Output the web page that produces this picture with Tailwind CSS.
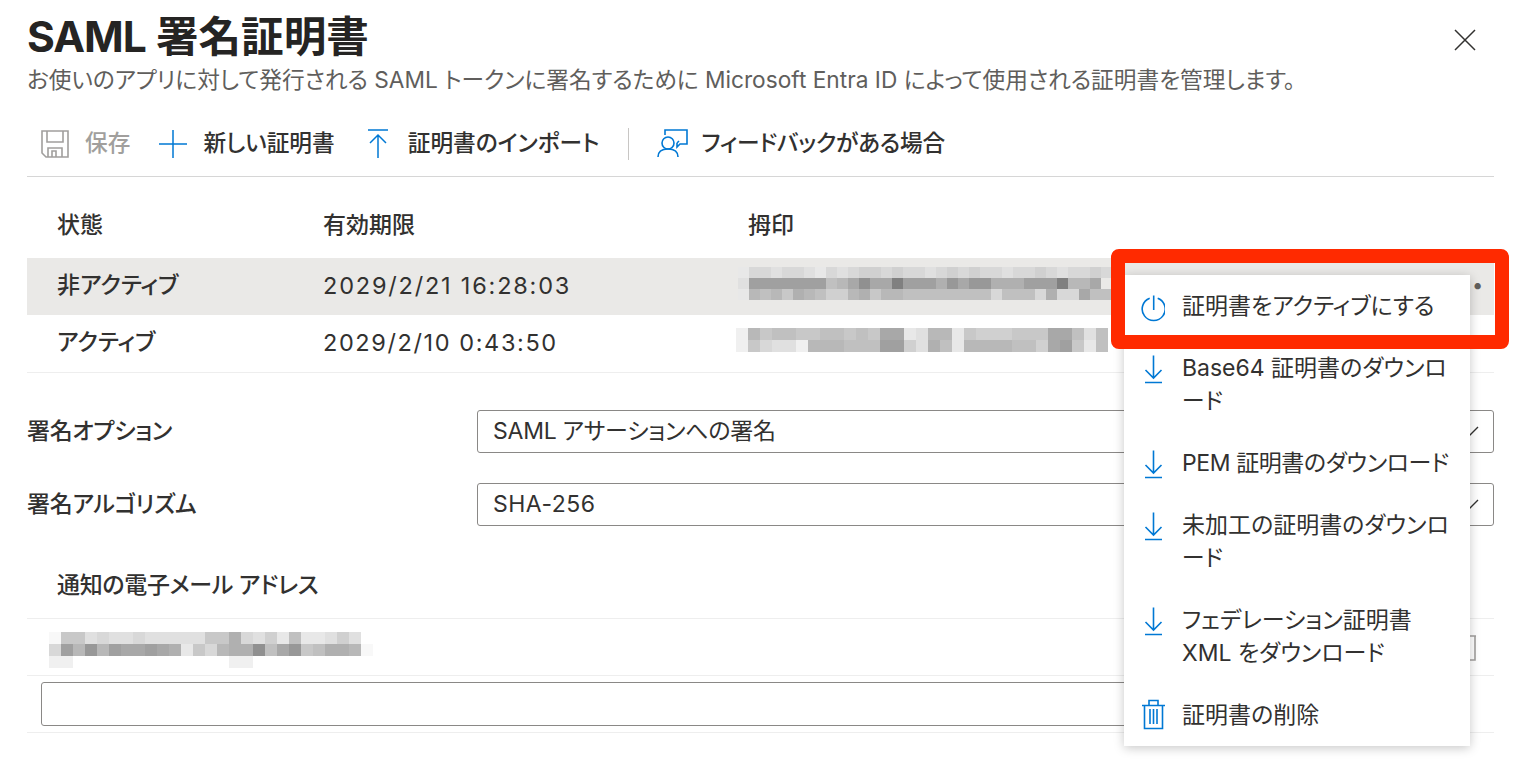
<!DOCTYPE html>
<html lang="ja">
<head>
<meta charset="utf-8">
<title>SAML 署名証明書</title>
<script src="https://cdn.jsdelivr.net/npm/@tailwindcss/browser@4"></script>
</head>
<body class="bg-white">
<div class="relative w-[1520px] h-[766px] overflow-hidden bg-white pl-[27px] pr-[26px] text-[#323130] font-['Inter','Noto_Sans_CJK_JP',sans-serif] text-[23px] [font-feature-settings:'palt']">

  <!-- close -->
  <svg class="absolute left-[1454px] top-[29px]" width="22" height="22" viewBox="0 0 22 22" fill="none" stroke="#323130" stroke-width="1.5"><path d="M1 1 21 21M21 1 1 21"/></svg>

  <!-- header -->
  <h1 class="mt-[6px] h-[62px] leading-[62px] text-[42.6px] font-bold text-[#252423]"><span class="tracking-[-1px]">SAML</span> 署名証明書</h1>
  <p class="h-[24px] leading-[24px] text-[22.7px] text-[#605e5c] whitespace-nowrap">お使いのアプリに対して発行される SAML トークンに署名するために Microsoft Entra ID によって使用される証明書を管理します。</p>

  <!-- toolbar -->
  <div class="mt-[19px] h-[66px] flex items-center border-b border-[#d6d6d6] font-medium text-[22.7px] whitespace-nowrap">
    <svg class="ml-[14px]" width="28" height="28" viewBox="0 0 28 28" fill="none" stroke="#a19f9d" stroke-width="1.6"><path d="M1 1H27V27H5L1 23Z"/><path d="M6 1V12H22V1"/><path d="M7 27V18H21V27"/><path d="M11 27V21H15V27"/></svg>
    <span class="ml-[16px] text-[#a19f9d]">保存</span>
    <svg class="ml-[29px]" width="28" height="28" viewBox="0 0 28 28" fill="none" stroke="#0078d4" stroke-width="1.5"><path d="M14 0V28M0 14H28"/></svg>
    <span class="ml-[16px]">新しい証明書</span>
    <svg class="ml-[33px]" width="20" height="30" viewBox="0 0 20 30" fill="none" stroke="#0078d4" stroke-width="1.5"><path d="M0 1H20M10 29V6M2 14 10 6 18 14"/></svg>
    <span class="ml-[20px]">証明書のインポート</span>
    <span class="ml-[29px] w-px h-[32px] bg-[#c8c6c4]"></span>
    <svg class="ml-[28px]" width="31" height="29" viewBox="0 0 31 29" fill="none" stroke="#0078d4" stroke-width="1.6"><path d="M8 6V1H30V15H23L20 18V14"/><circle cx="11" cy="14" r="6"/><path d="M1 28C1 22 6 20 11 20S21 22 21 28"/><path d="M22 12 20 14"/></svg>
    <span class="ml-[13px] tracking-[-0.2px]">フィードバックがある場合</span>
  </div>

  <!-- table -->
  <div class="h-[81px] pt-[15px] grid grid-cols-[296px_425px_1fr] items-center font-medium">
    <span class="pl-[30px]">状態</span><span>有効期限</span><span>拇印</span>
  </div>
  <div class="h-[57px] grid grid-cols-[296px_425px_1fr] items-center bg-[#eae9e7]">
    <span class="pl-[30px] pb-[2px] font-medium">非アクティブ</span>
    <span class="pb-[2px] tracking-[1.8px] text-[23.5px]">2029/2/21 16:28:03</span>
    <div class="relative h-full">
      <div data-m="11" class="absolute left-[-10px] top-[9px] h-[33px] flex flex-col" data-rows="dbbcbbcdbcbaababbcbababbcbbabcbbabc|c44444448752550444635336664440775|d7879678aa7697788888888b888b6bb58887"></div>
      <span class="absolute left-[724px] top-[13px] leading-[28px] text-[#605e5c] text-[20px]">•</span>
    </div>
  </div>
  <div class="h-[58px] grid grid-cols-[296px_425px_1fr] items-center border-b border-[#eeeeee]">
    <span class="pl-[30px] pb-[2px] font-medium">アクティブ</span>
    <span class="pb-[2px] tracking-[1.6px] text-[23.5px]">2029/2/10 0:43:50</span>
    <div class="relative h-full">
      <div data-m="12" class="absolute left-[-12px] top-[13px] h-[24px] flex flex-col" data-rows="e79889988989 55dc77d9aaa99955 8c8|e9bccE777888 44ac68d7777 88a549d8"></div>
    </div>
  </div>

  <!-- options -->
  <div class="mt-[37px] flex items-center h-[43px]">
    <span class="w-[450px] font-medium tracking-[-0.3px]">署名オプション</span>
    <div class="relative flex-1 h-full rounded-[3px] border border-[#8a8886] pl-[15px] flex items-center tracking-[-0.25px]">SAML アサーションへの署名
      <svg class="absolute right-[14px] top-[15px]" width="18" height="10" viewBox="0 0 18 10" fill="none" stroke="#323130" stroke-width="1.4"><path d="M1 1 9 9 17 1"/></svg>
    </div>
  </div>
  <div class="mt-[30px] flex items-center h-[43px]">
    <span class="w-[450px] font-medium tracking-[-0.25px]">署名アルゴリズム</span>
    <div class="relative flex-1 h-full rounded-[3px] border border-[#8a8886] pl-[15px] flex items-center tracking-[0.5px]">SHA-256
      <svg class="absolute right-[14px] top-[15px]" width="18" height="10" viewBox="0 0 18 10" fill="none" stroke="#323130" stroke-width="1.4"><path d="M1 1 9 9 17 1"/></svg>
    </div>
  </div>

  <!-- email -->
  <div class="h-[93px] pt-[26px] flex items-center pl-[30px] border-b border-[#eeeeee] font-medium tracking-[-0.3px]">通知の電子メール アドレス</div>
  <div class="relative h-[57px] border-b border-[#eeeeee]">
    <div data-m="12" class="absolute left-[22px] top-[13px] h-[36px] flex flex-col" data-rows="f99cbccbccccc99 6bcad8ddca c|b47374554 56d9b7662 8539 8667f|eexxxxxxxxxxxxxeexxxxxxxx"></div>
    <svg class="absolute left-[1440px] top-[16px]" width="12" height="26" viewBox="0 0 12 26" fill="none" stroke="#a19f9d" stroke-width="1.6"><path d="M0 1H9M8 1V25H0"/></svg>
  </div>
  <div class="h-[57px] pl-[14px] pt-[6px] border-b border-[#eeeeee]">
    <div class="w-[1200px] h-[44px] rounded-[3px] border border-[#8a8886]"></div>
  </div>

  <!-- context menu -->
  <div class="absolute left-[1124px] top-[275px] w-[346px] bg-white shadow-[0_2px_10px_rgba(0,0,0,0.22)] text-[23px] leading-[33px] text-[#323130]">
    <div class="flex py-[14.5px] pl-[17px]">
      <svg class="shrink-0 mr-[17px]" width="24" height="32" viewBox="0 0 24 32" fill="none" stroke="#0078d4" stroke-width="1.6"><path d="M8.7 8.2A11.5 11.5 0 1 0 16.7 8.2"/><path d="M12.7 5.5V20"/></svg>
      <span class="whitespace-nowrap">証明書をアクティブにする</span>
    </div>
    <div class="flex py-[14.5px] pl-[17px]">
      <svg class="shrink-0 mr-[17px]" width="24" height="32" viewBox="0 0 24 32" fill="none" stroke="#0078d4" stroke-width="1.6"><path d="M12.5 3.5V26M4.5 18 12.5 26 20.5 18M4 30.5H21"/></svg>
      <span class="whitespace-nowrap">Base64 証明書のダウンロ<br>ード</span>
    </div>
    <div class="flex py-[14.5px] pl-[17px]">
      <svg class="shrink-0 mr-[17px]" width="24" height="32" viewBox="0 0 24 32" fill="none" stroke="#0078d4" stroke-width="1.6"><path d="M12.5 3.5V26M4.5 18 12.5 26 20.5 18M4 30.5H21"/></svg>
      <span class="whitespace-nowrap tracking-[-0.4px]">PEM 証明書のダウンロード</span>
    </div>
    <div class="flex py-[14.5px] pl-[17px]">
      <svg class="shrink-0 mr-[17px]" width="24" height="32" viewBox="0 0 24 32" fill="none" stroke="#0078d4" stroke-width="1.6"><path d="M12.5 3.5V26M4.5 18 12.5 26 20.5 18M4 30.5H21"/></svg>
      <span class="whitespace-nowrap">未加工の証明書のダウンロ<br>ード</span>
    </div>
    <div class="flex py-[14.5px] pl-[17px]">
      <svg class="shrink-0 mr-[17px]" width="24" height="32" viewBox="0 0 24 32" fill="none" stroke="#0078d4" stroke-width="1.6"><path d="M12.5 3.5V26M4.5 18 12.5 26 20.5 18M4 30.5H21"/></svg>
      <span class="whitespace-nowrap">フェデレーション証明書<br>XML をダウンロード</span>
    </div>
    <div class="flex py-[14.5px] pl-[17px]">
      <svg class="shrink-0 mr-[17px]" width="24" height="32" viewBox="0 0 24 32" fill="none" stroke="#0078d4" stroke-width="1.6"><path d="M1 6.5H24M8 6.5V1.5H17V6.5M3.5 6.5V29.5H21.5V6.5"/><path d="M9 10V25M12.5 10V25M16 10V25"/></svg>
      <span>証明書の削除</span>
    </div>
  </div>

  <!-- annotation -->
  <div class="absolute left-[1111px] top-[249px] w-[398px] h-[100px] border-[14px] border-[#ff2a00] rounded-[8px]"></div>
</div>
<script>
  document.querySelectorAll('[data-rows]').forEach(function (box) {
    var size = +box.dataset.m;
    box.dataset.rows.replace(/ /g, '').split('|').forEach(function (row) {
      var line = document.createElement('div');
      line.className = 'flex flex-1';
      row.toLowerCase().split('').forEach(function (c) {
        var cell = document.createElement('div');
        var v = c === 'x' ? 255 : 128 + parseInt(c, 16) * 8;
        cell.style.width = size + 'px';
        cell.style.background = 'rgb(' + v + ',' + v + ',' + v + ')';
        line.appendChild(cell);
      });
      box.appendChild(line);
    });
  });
</script>
</body>
</html>
